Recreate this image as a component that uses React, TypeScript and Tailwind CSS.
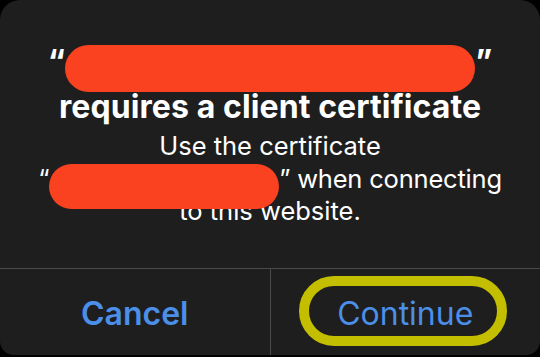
export default function App() {
  const font = { fontFamily: "Inter, 'Noto Sans', sans-serif" };
  return (
    <div className="w-[540px] h-[357px] bg-black" style={font}>
      <div className="flex h-[355px] flex-col rounded-t-[20px] rounded-b-[14px] bg-[#1e1e1e]">
        {/* Title */}
        <div className="flex flex-col items-center pt-[45px] text-white">
          <div className="flex items-start text-[32px] font-bold leading-none">
            <span className="mt-[1px]">“</span>
            <span className="h-[47px] w-[410px] rounded-full bg-[#fa4220]" />
            <span className="mt-[1px]">”</span>
          </div>
          <div className="mt-[-3px] text-[32px] font-bold leading-[36px] tracking-[0.1px]">
            requires a client certificate
          </div>
        </div>

        {/* Body */}
        <div className="mt-[5px] text-center text-[25.5px] leading-[32.5px] text-white">
          <div>Use the certificate</div>
          <div className="relative z-10 tracking-[-0.2px]">
            “<span className="relative inline-block h-[24px] w-[230px] align-middle">
              <span className="absolute left-0 top-[-5px] h-[45px] w-[230px] rounded-full bg-[#fa4220]" />
            </span>” when connecting
          </div>
          <div>to this website.</div>
        </div>

        {/* Buttons */}
        <div className="mt-auto flex h-[87px] border-t border-[#4a4a4a]">
          <button className="flex flex-1 items-center justify-center pt-[4px] text-[32px] font-semibold leading-none text-[#4b8fe9]">
            Cancel
          </button>
          <div className="w-px bg-[#4a4a4a]" />
          <div className="flex flex-1 items-center justify-center pt-[4px]">
            <button className="relative text-[32px] leading-none text-[#4b8fe9]">
              Continue
              <span className="absolute left-[-38px] right-[-34px] top-[-22px] bottom-[-16px] rounded-full border-[10px] border-[#c4be00]" />
            </button>
          </div>
        </div>
      </div>
    </div>
  );
}
